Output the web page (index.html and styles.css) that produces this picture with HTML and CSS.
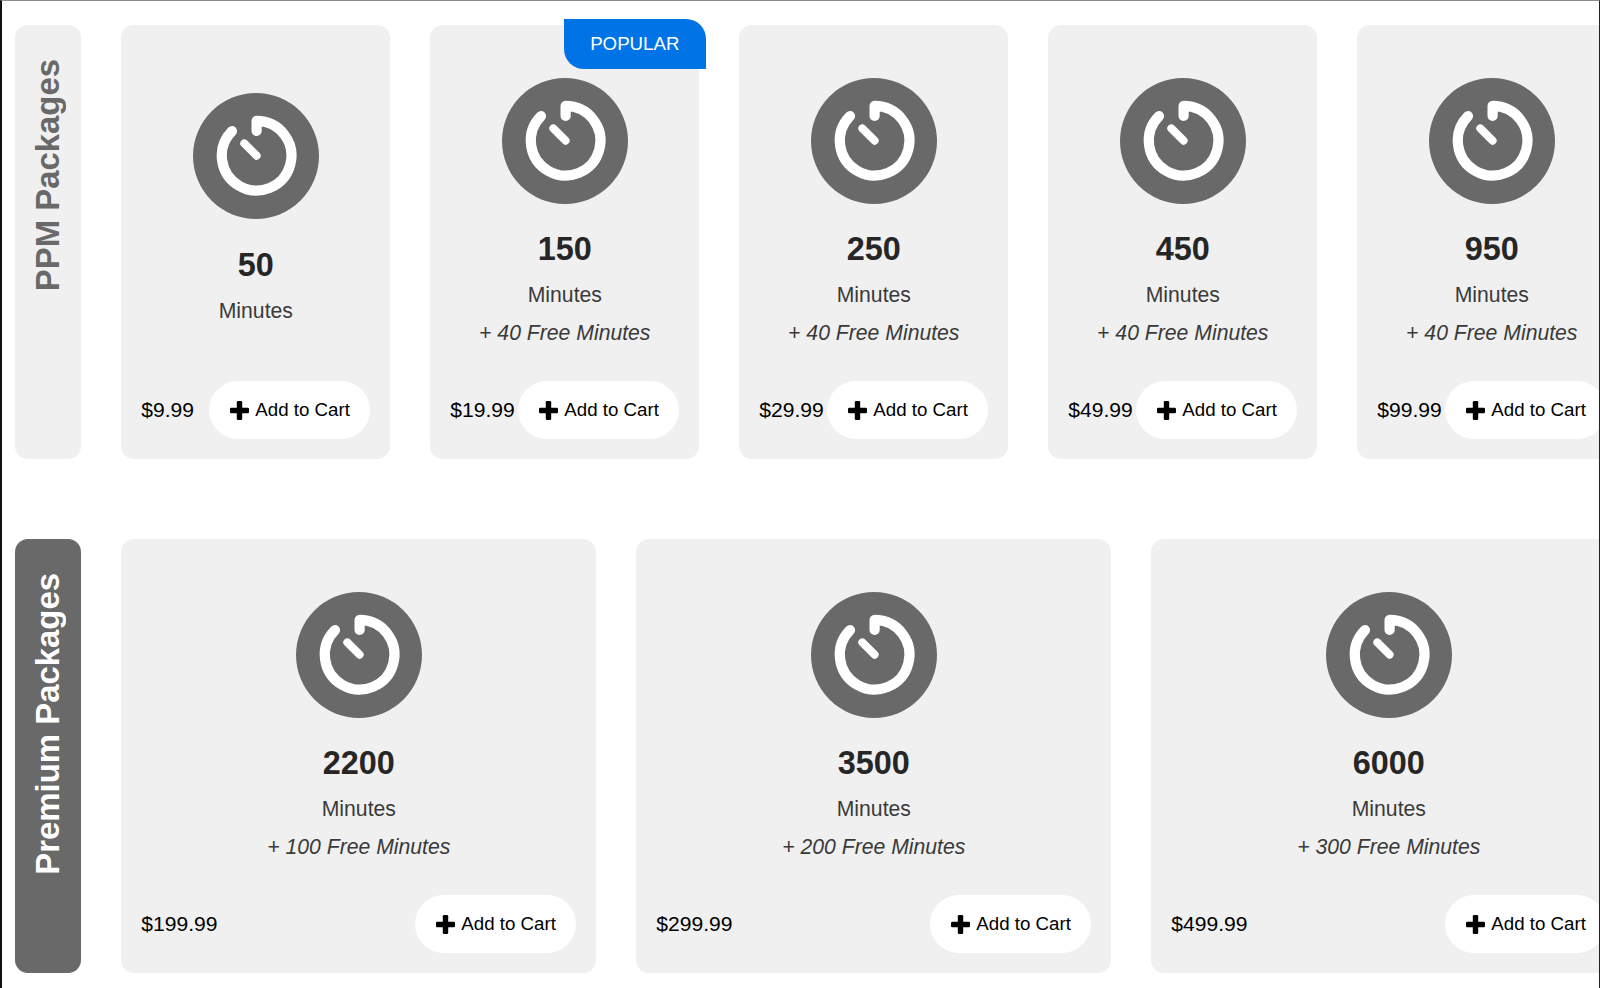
FILE: index.html
```html
<!DOCTYPE html>
<html lang="en">
<head>
  <meta charset="UTF-8">
  <title>Packages</title>
  <meta name="viewport" content="width=device-width, initial-scale=1.0">
  <link rel="stylesheet" href="styles.css">
</head>
<body>

  <!-- shared icons -->
  <svg class="icon-defs">
    <symbol id="icon-timer" viewBox="0 0 126 126">
      <circle cx="63" cy="63" r="63" fill="#696969"/>
      <g fill="none" stroke="#fff" stroke-linecap="round" stroke-linejoin="round">
        <path stroke-width="10.2" d="M63.6 38V27.9A34.8 34.8 0 1 1 39 38.1"/>
        <path stroke-width="8" d="M51.3 50.4L63.6 62.7"/>
      </g>
    </symbol>
    <symbol id="icon-plus" viewBox="0 0 19 19">
      <rect x="0" y="6.8" width="19" height="5.4" rx="1.3"/>
      <rect x="6.8" y="0" width="5.4" height="19" rx="1.3"/>
    </symbol>
  </svg>

  <main class="packages">

    <!-- PPM -->
    <section class="row">
      <div class="row-title"><span>PPM Packages</span></div>
      <div class="cards">
        <div class="card">
          <div class="card-body">
            <svg class="timer"><use href="#icon-timer"/></svg>
            <h2>50</h2>
            <p>Minutes</p>
          </div>
          <div class="card-footer">
            <span class="price">$9.99</span>
            <button class="btn"><svg class="plus"><use href="#icon-plus"/></svg>Add to Cart</button>
          </div>
        </div>
        <div class="card">
          <div class="badge">POPULAR</div>
          <div class="card-body">
            <svg class="timer"><use href="#icon-timer"/></svg>
            <h2>150</h2>
            <p>Minutes</p>
            <p class="free">+ 40 Free Minutes</p>
          </div>
          <div class="card-footer">
            <span class="price">$19.99</span>
            <button class="btn"><svg class="plus"><use href="#icon-plus"/></svg>Add to Cart</button>
          </div>
        </div>
        <div class="card">
          <div class="card-body">
            <svg class="timer"><use href="#icon-timer"/></svg>
            <h2>250</h2>
            <p>Minutes</p>
            <p class="free">+ 40 Free Minutes</p>
          </div>
          <div class="card-footer">
            <span class="price">$29.99</span>
            <button class="btn"><svg class="plus"><use href="#icon-plus"/></svg>Add to Cart</button>
          </div>
        </div>
        <div class="card">
          <div class="card-body">
            <svg class="timer"><use href="#icon-timer"/></svg>
            <h2>450</h2>
            <p>Minutes</p>
            <p class="free">+ 40 Free Minutes</p>
          </div>
          <div class="card-footer">
            <span class="price">$49.99</span>
            <button class="btn"><svg class="plus"><use href="#icon-plus"/></svg>Add to Cart</button>
          </div>
        </div>
        <div class="card">
          <div class="card-body">
            <svg class="timer"><use href="#icon-timer"/></svg>
            <h2>950</h2>
            <p>Minutes</p>
            <p class="free">+ 40 Free Minutes</p>
          </div>
          <div class="card-footer">
            <span class="price">$99.99</span>
            <button class="btn"><svg class="plus"><use href="#icon-plus"/></svg>Add to Cart</button>
          </div>
        </div>
      </div>
    </section>

    <!-- Premium -->
    <section class="row premium">
      <div class="row-title"><span>Premium Packages</span></div>
      <div class="cards">
        <div class="card">
          <div class="card-body">
            <svg class="timer"><use href="#icon-timer"/></svg>
            <h2>2200</h2>
            <p>Minutes</p>
            <p class="free">+ 100 Free Minutes</p>
          </div>
          <div class="card-footer">
            <span class="price">$199.99</span>
            <button class="btn"><svg class="plus"><use href="#icon-plus"/></svg>Add to Cart</button>
          </div>
        </div>
        <div class="card">
          <div class="card-body">
            <svg class="timer"><use href="#icon-timer"/></svg>
            <h2>3500</h2>
            <p>Minutes</p>
            <p class="free">+ 200 Free Minutes</p>
          </div>
          <div class="card-footer">
            <span class="price">$299.99</span>
            <button class="btn"><svg class="plus"><use href="#icon-plus"/></svg>Add to Cart</button>
          </div>
        </div>
        <div class="card">
          <div class="card-body">
            <svg class="timer"><use href="#icon-timer"/></svg>
            <h2>6000</h2>
            <p>Minutes</p>
            <p class="free">+ 300 Free Minutes</p>
          </div>
          <div class="card-footer">
            <span class="price">$499.99</span>
            <button class="btn"><svg class="plus"><use href="#icon-plus"/></svg>Add to Cart</button>
          </div>
        </div>
      </div>
    </section>

  </main>
</body>
</html>
```

FILE: styles.css
```css
* {
  box-sizing: border-box;
}

body {
  font-family: "Liberation Sans", Arial, sans-serif;
  background: #fff;
  margin: 0;
  overflow: hidden;
}

.icon-defs {
  display: none;
}

.packages {
  display: flex;
  flex-direction: column;
  gap: 80px;
  height: 100vh;
  padding: 24.3px 0 0 13px;
  border-top: 1px solid #8c8c8c;
  border-left: 2px solid #111;
  border-right: 1px solid #222;
  overflow: hidden;
}

.row {
  display: flex;
  flex-shrink: 0;
  gap: 40px;
  width: 1611.3px;
  height: 434px;
}

.row-title {
  flex: 0 0 66.3px;
  padding-top: 34px;
  border-radius: 13px;
  background: #f0f0f0;
  color: #696969;
  font-size: 32.9px;
  font-weight: bold;
  line-height: 66px;
}

.row-title span {
  display: block;
  writing-mode: vertical-rl;
  transform: rotate(180deg);
  white-space: nowrap;
}

.premium .row-title {
  background: #696969;
  color: #fff;
}

.cards {
  display: flex;
  flex: 1;
  gap: 40px;
}

.card {
  position: relative;
  display: flex;
  flex: 1 1 0;
  flex-direction: column;
  min-width: 0;
  padding: 20px;
  border-radius: 13px;
  background: #f0f0f0;
}

.card-body {
  display: flex;
  flex: 1;
  flex-direction: column;
  align-items: center;
  justify-content: center;
  padding-bottom: 7px;
}

.timer {
  width: 126px;
  height: 126px;
}

.card h2 {
  margin: 25.6px 0 9.8px;
  color: #262626;
  font-size: 32.4px;
  line-height: 40px;
}

.card p {
  margin: 0;
  color: #3a3a3a;
  font-size: 21.2px;
  line-height: 31.4px;
  white-space: nowrap;
}

.card .free {
  margin-top: 6.6px;
  margin-bottom: -6.6px;
  font-style: italic;
}

.card-footer {
  display: flex;
  align-items: center;
  justify-content: space-between;
}

.price {
  font-size: 21.1px;
}

.btn {
  display: flex;
  flex-shrink: 0;
  align-items: center;
  gap: 6.5px;
  width: 161px;
  height: 58px;
  padding: 0 0 0 20.5px;
  border: none;
  border-radius: 29px;
  background: #fff;
  color: #000;
  font-family: inherit;
  font-size: 18.7px;
  white-space: nowrap;
  cursor: pointer;
}

.plus {
  width: 19px;
  height: 19px;
}

.badge {
  position: absolute;
  top: -6.5px;
  right: -6.5px;
  width: 142px;
  height: 50.5px;
  border-radius: 0 20px 0 20px;
  background: #0073e6;
  color: #fff;
  font-size: 18.7px;
  line-height: 50px;
  text-align: center;
}
```
